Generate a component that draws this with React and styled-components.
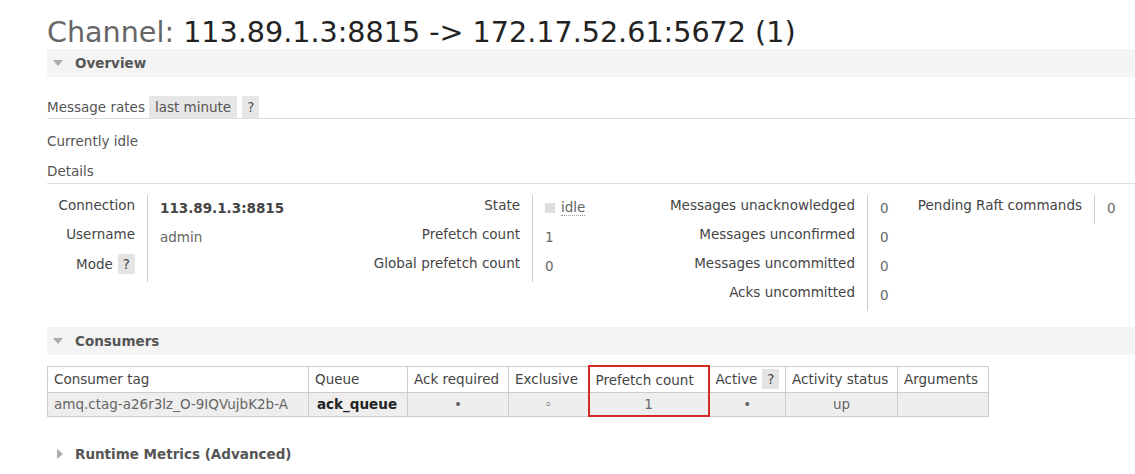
import React from "react";
import styled, {createGlobalStyle} from 'styled-components';

const GlobalStyle = createGlobalStyle`
  body {
    margin: 0;
    background: #fff;
    font-family: "DejaVu Sans", Verdana, sans-serif;
    font-size: 13.5px;
    color: #444;
  }
`

const Page = styled.div`
  padding: 16px 0 0 47px;
`

const Title = styled.h1`
  margin: 0;
  font-size: 28.6px;
  font-weight: normal;
  line-height: 33px;
  color: #666;

  b {
    font-weight: normal;
    color: #222;
  }
`

const SectionHeader = styled.div`
  display: flex;
  align-items: center;
  height: 28px;
  margin-top: ${props => props.$top || 0}px;
  padding-left: 6px;
  background: ${props => props.$collapsed ? 'transparent' : '#f4f4f4'};
  font-weight: bold;
  color: #555;

  .arrow {
    width: 10px;
    display: flex;
    justify-content: ${props => props.$collapsed ? 'flex-end' : 'center'};
    margin-right: 12px;
  }
`

const RatesRow = styled.div`
  display: flex;
  align-items: center;
  height: 22px;
  margin-top: 19px;
  border-bottom: 1px solid #ddd;
  color: #555;
`

const Badge = styled.span`
  display: inline-block;
  height: 22px;
  line-height: 22px;
  padding: 0 ${props => props.$pad || 6}px;
  margin-left: ${props => props.$gap || 4}px;
  background: #e6e6e6;
  color: #555;
`

const Para = styled.div`
  line-height: 18px;
  margin-top: ${props => props.$top}px;
  color: #555;
`

const DetailsHeading = styled.div`
  line-height: 18px;
  margin-top: 12px;
  padding-bottom: 3px;
  border-bottom: 1px solid #ddd;
  color: #555;
`

const FactsRow = styled.div`
  display: flex;
  margin-top: 11px;
`

const FactGrid = styled.div`
  display: grid;
  grid-template-columns: ${props => props.$label}px ${props => props.$value}px;
  grid-auto-rows: 29px;
  align-self: flex-start;
`

const Label = styled.div`
  text-align: right;
  padding-right: 12px;
  padding-top: 1px;
  border-right: 1px solid #ccc;
  line-height: 18px;
  color: #444;
  white-space: nowrap;
`

const Value = styled.div`
  padding: 4px 0 0 12px;
  line-height: 18px;
  color: ${props => props.$strong ? '#444' : '#666'};
  font-weight: ${props => props.$strong ? 'bold' : 'normal'};
  white-space: nowrap;
  display: flex;
  align-items: center;
  align-self: start;
  height: 18px;
`

const StateBox = styled.span`
  display: inline-block;
  width: 10px;
  height: 10px;
  background: #ddd;
  margin-right: 6px;
`

const StateText = styled.span`
  color: #666;
  border-bottom: 1px dotted #999;
  line-height: 15px;
`

const HelpBadge = styled.span`
  display: inline-block;
  height: 20px;
  line-height: 20px;
  padding: 0 5px;
  margin-left: 5px;
  background: #e4e4e4;
`

const Table = styled.table`
  border-collapse: collapse;
  table-layout: fixed;
  width: 941px;
  margin-top: 10px;
  font-size: 13.5px;
`

const Col = styled.col`
  width: ${props => props.$w}px;
`

const Th = styled.th`
  font-weight: normal;
  text-align: left;
  height: 25px;
  padding: 0 6px;
  border: 1px solid #ccc;
  color: #444;
  background: #fff;
  white-space: nowrap;
  overflow: hidden;
  ${props => props.$mark && `
    border: 2px solid #d42a26;
    border-bottom: 1px solid #ccc;
  `}
`

const Td = styled.td`
  height: 22px;
  padding: 0 6px;
  border: 1px solid #ccc;
  background: #eee;
  color: #666;
  text-align: ${props => props.$left ? 'left' : 'center'};
  font-weight: ${props => props.$bold ? 'bold' : 'normal'};
  white-space: nowrap;
  ${props => props.$bold && 'color: #222; padding-left: 8px;'}
  ${props => props.$mark && `
    border: 2px solid #d42a26;
    border-top: 1px solid #ccc;
  `}
`

const Arrow = ({open}) => (
  open ? (
    <svg width="10" height="7" viewBox="0 0 10 7">
      <path d="M0 0 L10 0 L5 6 Z" fill="#aaa"/>
    </svg>
  ) : (
    <svg width="6" height="10" viewBox="0 0 6 10">
      <path d="M0 0 L6 5 L0 10 Z" fill="#aaa"/>
    </svg>
  )
)

const facts = [
  {label: 101, value: 212, rows: [
    ['Connection', <Value $strong>113.89.1.3:8815</Value>],
    ['Username', <Value>admin</Value>],
    [<>Mode<HelpBadge>?</HelpBadge></>, <Value/>],
  ]},
  {label: 173, value: 124, rows: [
    ['State', <Value><StateBox/><StateText>idle</StateText></Value>],
    ['Prefetch count', <Value>1</Value>],
    ['Global prefetch count', <Value>0</Value>],
  ]},
  {label: 211, value: 34, rows: [
    ['Messages unacknowledged', <Value>0</Value>],
    ['Messages unconfirmed', <Value>0</Value>],
    ['Messages uncommitted', <Value>0</Value>],
    ['Acks uncommitted', <Value>0</Value>],
  ]},
  {label: 193, value: 40, rows: [
    ['Pending Raft commands', <Value>0</Value>],
  ]},
]

const columns = [261, 99, 101, 80, 120, 77, 112, 91]

const App = () => {
  return (
    <Page>
      <GlobalStyle/>
      <Title>Channel: <b>113.89.1.3:8815 -&gt; 172.17.52.61:5672 (1)</b></Title>

      <SectionHeader>
        <span className="arrow"><Arrow open/></span>Overview
      </SectionHeader>

      <RatesRow>
        Message rates
        <Badge>last minute</Badge>
        <Badge $pad={5} $gap={5}>?</Badge>
      </RatesRow>
      <Para $top={13}>Currently idle</Para>
      <DetailsHeading>Details</DetailsHeading>

      <FactsRow>
        {facts.map((table, i) => (
          <FactGrid key={i} $label={table.label} $value={table.value}>
            {table.rows.map((row, j) => (
              <React.Fragment key={j}>
                <Label>{row[0]}</Label>
                {row[1]}
              </React.Fragment>
            ))}
          </FactGrid>
        ))}
      </FactsRow>

      <SectionHeader $top={16}>
        <span className="arrow"><Arrow open/></span>Consumers
      </SectionHeader>

      <Table>
        <colgroup>
          {columns.map((w, i) => <Col key={i} $w={w}/>)}
        </colgroup>
        <thead>
          <tr>
            <Th>Consumer tag</Th>
            <Th>Queue</Th>
            <Th>Ack required</Th>
            <Th>Exclusive</Th>
            <Th $mark>Prefetch count</Th>
            <Th>Active<HelpBadge>?</HelpBadge></Th>
            <Th>Activity status</Th>
            <Th>Arguments</Th>
          </tr>
        </thead>
        <tbody>
          <tr>
            <Td $left>amq.ctag-a26r3lz_O-9IQVujbK2b-A</Td>
            <Td $left $bold>ack_queue</Td>
            <Td>•</Td>
            <Td>◦</Td>
            <Td $mark>1</Td>
            <Td>•</Td>
            <Td>up</Td>
            <Td></Td>
          </tr>
        </tbody>
      </Table>

      <SectionHeader $top={23} $collapsed>
        <span className="arrow"><Arrow/></span>Runtime Metrics (Advanced)
      </SectionHeader>
    </Page>
  )
}

export default App
